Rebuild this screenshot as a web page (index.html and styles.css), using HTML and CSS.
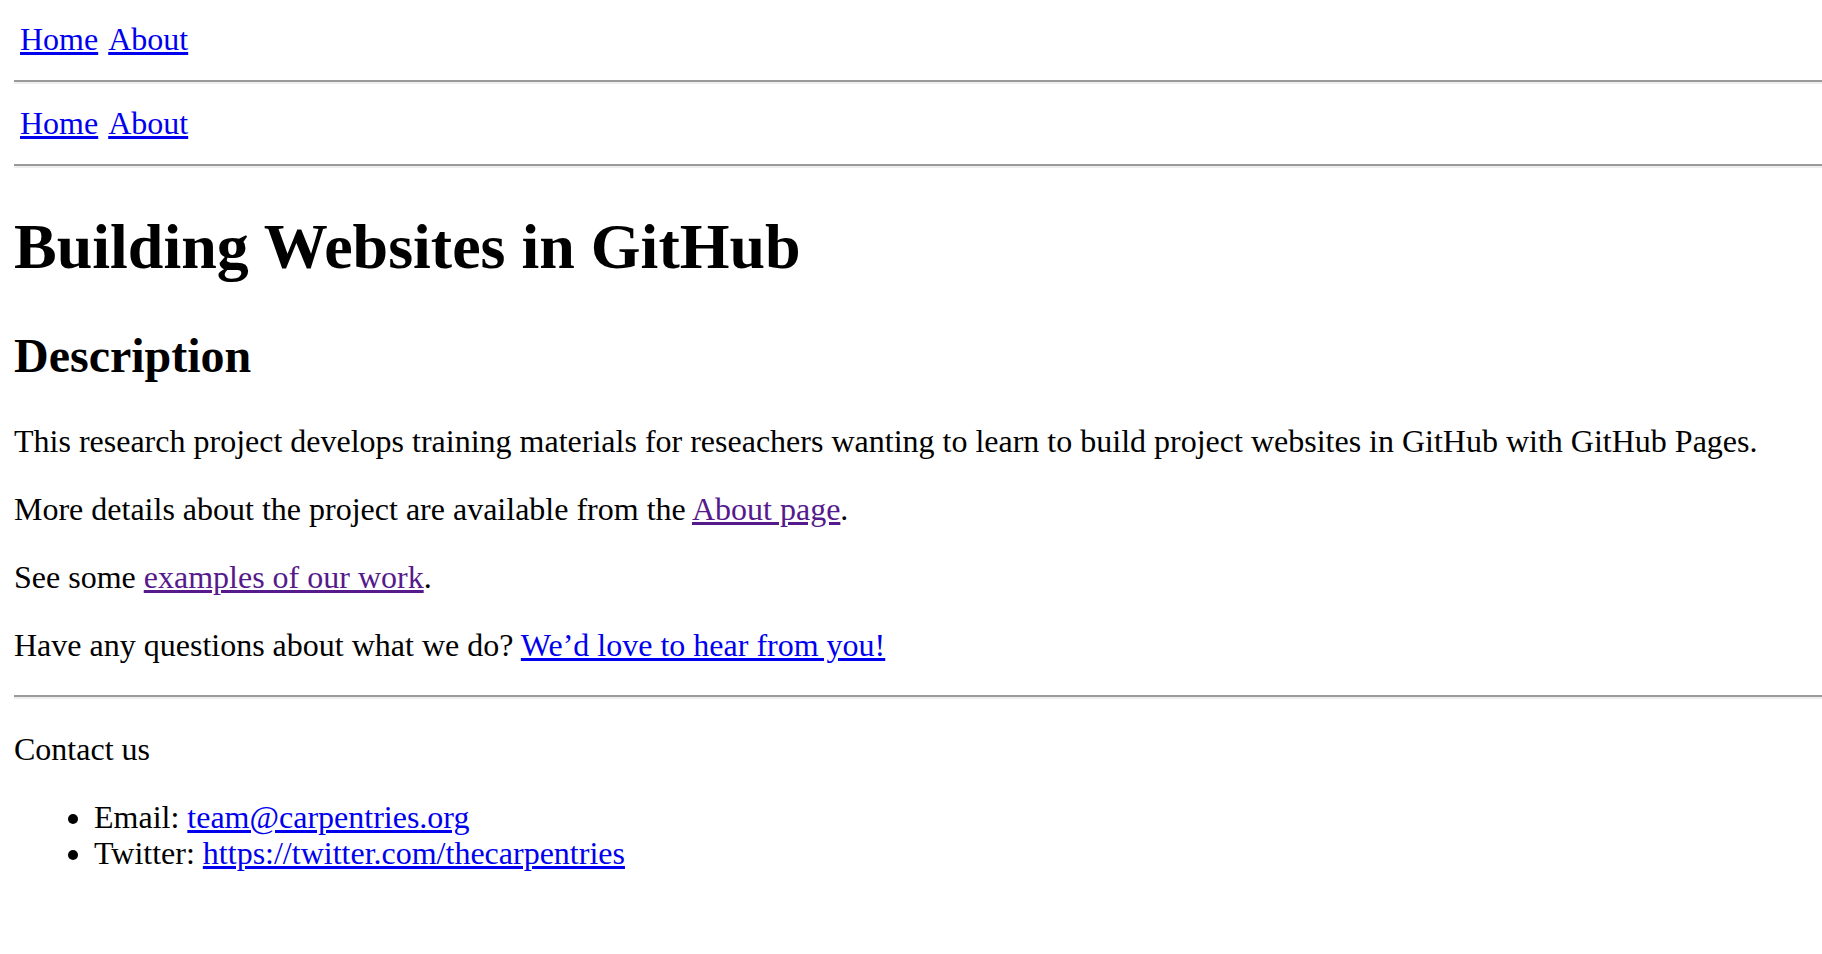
FILE: index.html
```html
<!DOCTYPE html>
<html lang="en">
<head>
<meta charset="utf-8">
<title>Building Websites in GitHub</title>
<link rel="stylesheet" href="styles.css">
</head>
<body>
<header class="site-header">
  <nav class="site-nav">
    <a class="nav-link" href="#">Home</a>
    <a class="nav-link" href="#">About</a>
  </nav>
  <hr class="rule">
  <nav class="site-nav">
    <a class="nav-link" href="#">Home</a>
    <a class="nav-link" href="#">About</a>
  </nav>
  <hr class="rule">
</header>
<main class="content">
  <h1 class="title">Building Websites in GitHub</h1>
  <h2 class="section-title">Description</h2>
  <p class="para">This research project develops training materials for reseachers wanting to learn to build project websites in GitHub with GitHub Pages.</p>
  <p class="para">More details about the project are available from the <a class="link visited" href="#">About page</a>.</p>
  <p class="para">See some <a class="link visited" href="#">examples of our work</a>.</p>
  <p class="para">Have any questions about what we do? <a class="link" href="#">We’d love to hear from you!</a></p>
</main>
<footer class="site-footer">
  <hr class="rule footer-rule">
  <p class="para">Contact us</p>
  <ul class="contact-list">
    <li>Email: <a class="link" href="#">team@carpentries.org</a></li>
    <li>Twitter: <a class="link" href="#">https://twitter.com/thecarpentries</a></li>
  </ul>
</footer>
</body>
</html>
```

FILE: styles.css
```css
html, body {
  background: #ffffff;
}

body {
  margin: 0 0 0 14px;
  font-family: "Liberation Serif", "Times New Roman", serif;
  font-size: 32px;
  line-height: 36px;
  color: #000000;
}

a {
  color: #0000ee;
  text-decoration: underline;
}

.visited {
  color: #551a8b;
}

.site-nav {
  display: flex;
  gap: 10px;
  padding: 21px 0 23px 6px;
}

.rule {
  margin: 0;
  height: 0;
  border: 0;
  border-top: 2px solid #9a9a9a;
  border-bottom: 2px solid #eeeeee;
}

.title {
  font-size: 64px;
  line-height: normal;
  font-weight: bold;
  margin: 42px 0;
}

.section-title {
  font-size: 48px;
  line-height: normal;
  font-weight: bold;
  margin: 44px 0 40px;
}

.para {
  margin: 32px 0;
}

.footer-rule {
  margin: 16px 0;
}

.contact-list {
  margin: 32px 0;
  padding-left: 80px;
}
```
